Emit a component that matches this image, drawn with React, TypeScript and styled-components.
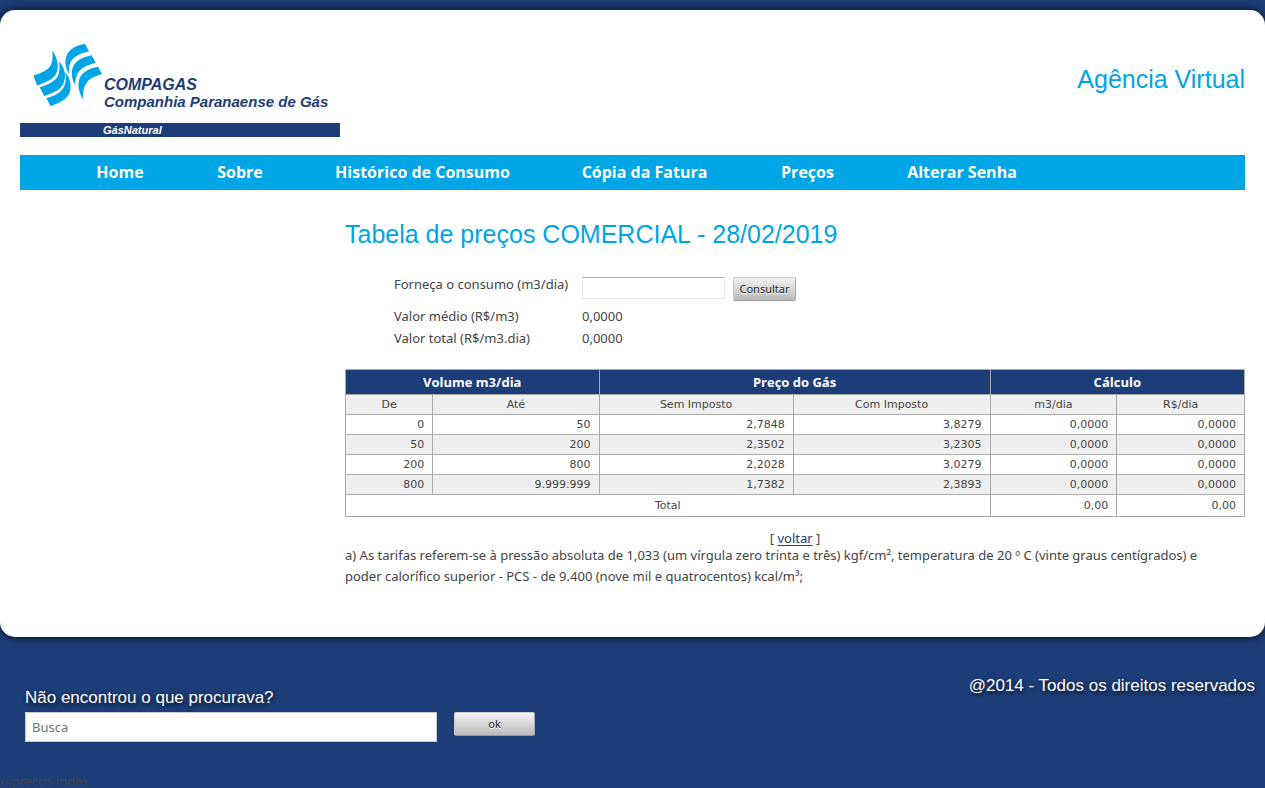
import React from 'react';
import styled, { createGlobalStyle } from 'styled-components';

const navy = '#1d3d78';
const sky = '#00a5e6';
const ink = '#444444';
const bodyFont = '"Noto Sans", "Trebuchet MS", sans-serif';
const strongFont = '"Open Sans", "Trebuchet MS", sans-serif';
const titleFont = 'Arial, "Liberation Sans", sans-serif';
const dataFont = 'Verdana, "DejaVu Sans", sans-serif';

const GlobalStyle = createGlobalStyle`
  * { box-sizing: border-box; }
  body {
    margin: 0;
    background: ${navy};
    color: ${ink};
    font: 13px/21px ${bodyFont};
  }
`;

const Page = styled.div`
  padding-top: 10px;
`;

const Panel = styled.div`
  padding: 20px 20px 50px;
  background: #fff;
  border-radius: 15px;
  box-shadow: 0 0 10px rgba(0, 0, 0, 0.8);
`;

const Header = styled.header`
  display: flex;
  justify-content: space-between;
  padding-bottom: 18px;
`;

const SiteTitle = styled.h1`
  margin: 34px 0 0;
  color: ${sky};
  font: 25px/30px ${titleFont};
`;

const Nav = styled.nav`
  padding-left: 40px;
  background: ${sky};
`;

const NavList = styled.ul`
  display: flex;
  margin: 0;
  padding: 0;
  list-style: none;
`;

const NavItem = styled.li<{ $width: number }>`
  flex: 0 1 ${(p) => p.$width}px;
  text-align: center;
`;

const NavLink = styled.a`
  display: block;
  color: #fff;
  font: 700 16px/35px ${strongFont};
  text-decoration: none;
  white-space: nowrap;
`;

const Main = styled.main`
  margin-left: 325px;
  padding-top: 29px;
`;

const PageTitle = styled.h2`
  margin: 0 0 28px;
  color: ${sky};
  font: 25px/30px ${titleFont};
`;

const Form = styled.form`
  display: grid;
  grid-template-columns: 180px 1fr;
  column-gap: 8px;
  margin: 0 0 20px 49px;
  line-height: 22px;
`;

const FormControls = styled.div`
  display: flex;
  gap: 8px;
  height: 28px;
`;

const FieldLabel = styled.label`
  line-height: 15px;
  white-space: nowrap;
`;

const FieldName = styled.span`
  white-space: nowrap;
`;

const AmountInput = styled.input`
  width: 143px;
  height: 22px;
  border: 1px solid #e3e9ef;
  border-top-color: #abadb3;
  font: 13px ${bodyFont};
`;

const Button = styled.button<{ $width: number }>`
  width: ${(p) => p.$width}px;
  height: 24px;
  padding: 0;
  border: 1px solid;
  border-color: #ccc #aaa #999 #ccc;
  border-radius: 2px;
  background: linear-gradient(#f4f4f4, #b9b9b9);
  color: #222;
  font: 11px/20px ${bodyFont};
  text-shadow: 0 1px 0 #fff;
`;

const PriceTable = styled.table`
  width: 100%;
  border-collapse: collapse;
  table-layout: fixed;
  font: 11px/14px ${dataFont};
`;

const GroupHead = styled.th`
  height: 25px;
  padding: 0;
  border: 1px solid #aaa;
  background: ${navy};
  color: #fff;
  font: 700 13px/20px ${strongFont};
`;

const ColumnHead = styled.th`
  height: 20px;
  padding: 0;
  border: 1px solid #aaa;
  background: #efefef;
  font-weight: 400;
`;

const Row = styled.tr<{ $shaded?: boolean }>`
  height: 20px;
  background: ${(p) => (p.$shaded ? '#efefef' : '#fff')};
`;

const TotalRow = styled(Row)`
  height: 22px;
`;

const Cell = styled.td<{ $center?: boolean }>`
  padding: 2px 8px;
  border: 1px solid #aaa;
  text-align: ${(p) => (p.$center ? 'center' : 'right')};
`;

const Back = styled.p`
  margin: 15px 0 0;
  line-height: 13px;
  text-align: center;
`;

const BackLink = styled.a`
  color: ${navy};
  text-underline-offset: 2px;
`;

const Note = styled.p`
  margin: 0;
  padding-right: 16px;
`;

const Footer = styled.footer`
  display: flex;
  justify-content: space-between;
  padding: 39px 10px 32px 25px;
  color: #fff;
  font: 17px/20px ${titleFont};
  text-shadow: 1px 2px 4px rgba(0, 0, 0, 0.8);
`;

const Search = styled.form`
  display: grid;
  grid-template-columns: 412px 81px;
  gap: 4px 17px;
  padding-top: 12px;
`;

const SearchLabel = styled.label`
  grid-column: 1 / -1;
`;

const SearchInput = styled.input`
  height: 30px;
  padding: 0 6px;
  border: 1px solid #ccc;
  background: #fff;
  font: 13px ${bodyFont};
  &::placeholder { color: #757575; }
`;

const Trace = styled.div`
  line-height: 14px;
`;

const Logo = () => (
  <svg width="320" height="107" viewBox="20 30 320 107" role="img" aria-label="Compagas">
    <g transform="translate(20 35) scale(0.33333)" fill={sky}>
      <path d="M97 46 C110 66 117 88 112 106 C105 136 76 141 52 152 L40 122 C66 112 84 106 93 89 C99 77 98 62 97 46Z" />
      <path d="M117 79 C132 96 139 117 133 137 C125 168 99 172 73 183 L59 157 C86 147 104 141 114 122 C120 109 119 94 117 79Z" />
      <path d="M136 111 C149 128 156 149 150 169 C142 197 116 203 92 214 L79 190 C104 181 121 175 132 155 C139 141 138 126 136 111Z" />
      <path d="M195 27 C170 30 150 42 141 59 C132 78 136 98 147 117 C145 97 149 79 164 67 C176 57 191 54 207 49Z" />
      <path d="M215 61 C190 66 169 75 160 94 C152 113 155 132 166 151 C165 132 170 114 185 101 C197 91 211 88 227 83Z" />
      <path d="M234 95 C209 100 187 110 179 130 C171 151 177 174 190 195 C187 174 191 151 206 136 C218 125 231 122 246 117Z" />
    </g>
    <rect x="20" y="123" width="320" height="14" fill={navy} />
    <g fontFamily={titleFont} fontWeight="700" fontStyle="italic" fill={navy}>
      <text x="104" y="90" fontSize="16">COMPAGAS</text>
      <text x="104" y="107" fontSize="15">Companhia Paranaense de Gás</text>
      <text x="103" y="134" fontSize="11" fill="#fff">GásNatural</text>
    </g>
  </svg>
);

const navItems = [
  { label: 'Home', width: 120 },
  { label: 'Sobre', width: 120 },
  { label: 'Histórico de Consumo', width: 245 },
  { label: 'Cópia da Fatura', width: 199 },
  { label: 'Preços', width: 127 },
  { label: 'Alterar Senha', width: 182 },
];

const columnWidths = ['9.7%', '18.5%', '21.6%', '21.9%', '14.1%', '14.2%'];
const columns = ['De', 'Até', 'Sem Imposto', 'Com Imposto', 'm3/dia', 'R$/dia'];
const rows = [
  ['0', '50', '2,7848', '3,8279', '0,0000', '0,0000'],
  ['50', '200', '2,3502', '3,2305', '0,0000', '0,0000'],
  ['200', '800', '2,2028', '3,0279', '0,0000', '0,0000'],
  ['800', '9.999.999', '1,7382', '2,3893', '0,0000', '0,0000'],
];

export default function App() {
  return (
    <Page>
      <GlobalStyle />
      <Panel>
        <Header>
          <Logo />
          <SiteTitle>Agência Virtual</SiteTitle>
        </Header>
        <Nav>
          <NavList>
            {navItems.map((item) => (
              <NavItem key={item.label} $width={item.width}>
                <NavLink href="#">{item.label}</NavLink>
              </NavItem>
            ))}
          </NavList>
        </Nav>
        <Main>
          <PageTitle>Tabela de preços COMERCIAL - 28/02/2019</PageTitle>
          <Form onSubmit={(e) => e.preventDefault()}>
            <FieldLabel htmlFor="consumo">Forneça o consumo (m3/dia)</FieldLabel>
            <FormControls>
              <AmountInput id="consumo" type="text" />
              <Button type="submit" $width={63}>Consultar</Button>
            </FormControls>
            <FieldName>Valor médio (R$/m3)</FieldName>
            <span>0,0000</span>
            <FieldName>Valor total (R$/m3.dia)</FieldName>
            <span>0,0000</span>
          </Form>
          <PriceTable>
            <colgroup>
              {columnWidths.map((width, i) => (
                <col key={i} width={width} />
              ))}
            </colgroup>
            <thead>
              <tr>
                <GroupHead colSpan={2}>Volume m3/dia</GroupHead>
                <GroupHead colSpan={2}>Preço do Gás</GroupHead>
                <GroupHead colSpan={2}>Cálculo</GroupHead>
              </tr>
              <tr>
                {columns.map((name) => (
                  <ColumnHead key={name}>{name}</ColumnHead>
                ))}
              </tr>
            </thead>
            <tbody>
              {rows.map((row, i) => (
                <Row key={row[0]} $shaded={i % 2 === 1}>
                  {row.map((value, j) => (
                    <Cell key={j}>{value}</Cell>
                  ))}
                </Row>
              ))}
              <TotalRow>
                <Cell colSpan={4} $center>Total</Cell>
                <Cell>0,00</Cell>
                <Cell>0,00</Cell>
              </TotalRow>
            </tbody>
          </PriceTable>
          <Back>
            [ <BackLink href="#">voltar</BackLink> ]
          </Back>
          <Note>
            a) As tarifas referem-se à pressão absoluta de 1,033 (um vírgula zero trinta e três) kgf/cm²,
            temperatura de 20 º C (vinte graus centígrados) e poder calorífico superior - PCS - de 9.400
            (nove mil e quatrocentos) kcal/m³;
          </Note>
        </Main>
      </Panel>
      <Footer>
        <Search onSubmit={(e) => e.preventDefault()}>
          <SearchLabel htmlFor="busca">Não encontrou o que procurava?</SearchLabel>
          <SearchInput id="busca" type="text" placeholder="Busca" />
          <Button type="submit" $width={81}>ok</Button>
        </Search>
        <span>@2014 - Todos os direitos reservados</span>
      </Footer>
      <Trace>uiprecos index</Trace>
    </Page>
  );
}
